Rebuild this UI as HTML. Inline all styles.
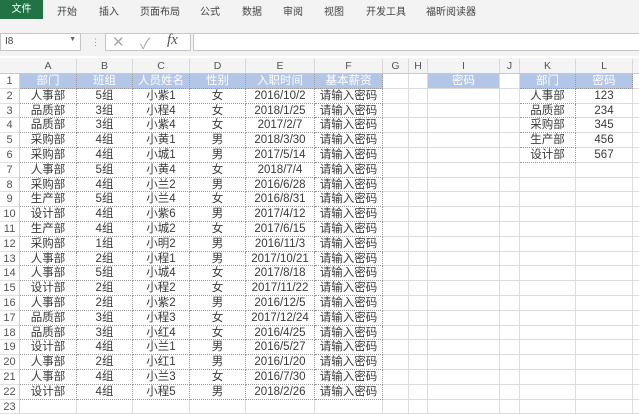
<!DOCTYPE html><html><head><meta charset="utf-8"><style>
body{margin:0;width:639px;height:407px;overflow:hidden;background:#fff;font-family:"Liberation Sans","Noto Sans CJK SC",sans-serif;position:relative}
.a{position:absolute;box-sizing:border-box}
.tab{position:absolute;top:3px;font-size:10px;color:#444}
.c{position:absolute;box-sizing:border-box;text-align:center;font-size:11.5px;color:#3a3a3a;white-space:nowrap;overflow:hidden;line-height:14.8px}
.g{border-right:1px solid #dcdcdc;border-bottom:1px solid #dcdcdc}
.d{border-right:1px dotted #999;border-bottom:1px dotted #999}
.h{background:#b4c6e7;color:#fff}
.ch{position:absolute;top:59px;height:14px;font-size:10.5px;color:#555;text-align:center;border-right:1px solid #d8d8d8;box-sizing:border-box;line-height:14px}
.rh{position:absolute;left:0;width:20px;font-size:11px;color:#555;text-align:center;border-bottom:1px solid #e0e0e0;border-right:1px solid #d0d0d0;box-sizing:border-box;background:#fff;line-height:14.8px}
</style></head><body>
<div class="a" style="left:0;top:0;width:639px;height:56px;background:#f3f3f3"></div>
<div class="a" style="left:0;top:0;width:43px;height:19px;background:#217346;color:#fff;font-size:10px;text-align:center;line-height:19px">文件</div>
<span class="tab" style="left:57px">开始</span><span class="tab" style="left:99px">插入</span><span class="tab" style="left:140px">页面布局</span><span class="tab" style="left:200px">公式</span><span class="tab" style="left:242px">数据</span><span class="tab" style="left:283px">审阅</span><span class="tab" style="left:324px">视图</span><span class="tab" style="left:366px">开发工具</span><span class="tab" style="left:426px">福昕阅读器</span>
<div class="a" style="left:0;top:33px;width:639px;height:1px;background:#d6d6d6"></div>
<div class="a" style="left:0;top:33px;width:81px;height:18px;background:#fff;border:1px solid #c6c6c6;font-size:10px;color:#444;padding:2px 4px">I8<span style="position:absolute;right:4px;top:2px;font-size:7px;color:#666">▼</span></div>
<div class="a" style="left:91px;top:37px;font-size:9px;color:#999">⋮</div>
<div class="a" style="left:105px;top:33px;width:86px;height:18px;background:#fff;border:1px solid #c6c6c6"></div>
<div class="a" style="left:112px;top:33px;font-size:15px;color:#aaa">✕</div>
<div class="a" style="left:140px;top:33px;font-size:15px;color:#aaa">✓</div>
<div class="a" style="left:167px;top:32px;font-size:15px;color:#555;font-style:italic;font-family:'Liberation Serif',serif">fx</div>
<div class="a" style="left:193px;top:33px;width:446px;height:18px;background:#fff;border:1px solid #c6c6c6;border-right:none"></div>
<div class="a" style="left:0;top:58px;width:639px;height:16px;background:#f4f4f4;border-bottom:1px solid #c8c8c8"></div>
<div id="g"></div>
<script>
var xs=[20,77,133,190,246,315,383,409,428,500,520,576,633,660],L="ABCDEFGHIJKLM",o="";
for(var i=0;i<13;i++)o+='<div class="ch" style="left:'+xs[i]+'px;width:'+(xs[i+1]-xs[i])+'px">'+L[i]+'</div>';
var R=[["部门","班组","人员姓名","性别","入职时间","基本薪资"],
["人事部","5组","小紫1","女","2016/10/2"],["品质部","3组","小程4","女","2018/1/25"],["品质部","3组","小紫4","女","2017/2/7"],["采购部","4组","小黄1","男","2018/3/30"],["采购部","4组","小城1","男","2017/5/14"],["人事部","5组","小黄4","女","2018/7/4"],["采购部","4组","小兰2","男","2016/6/28"],["生产部","5组","小兰4","女","2016/8/31"],["设计部","4组","小紫6","男","2017/4/12"],["生产部","4组","小城2","女","2017/6/15"],["采购部","1组","小明2","男","2016/11/3"],["人事部","2组","小程1","男","2017/10/21"],["人事部","5组","小城4","女","2017/8/18"],["设计部","2组","小程2","女","2017/11/22"],["人事部","2组","小紫2","男","2016/12/5"],["品质部","3组","小程3","女","2017/12/24"],["品质部","3组","小红4","女","2016/4/25"],["设计部","4组","小兰1","男","2016/5/27"],["人事部","2组","小红1","男","2016/1/20"],["人事部","4组","小兰3","女","2016/7/30"],["设计部","4组","小程5","男","2018/2/26"]];
var K=[["部门","密码"],["人事部","123"],["品质部","234"],["采购部","345"],["生产部","456"],["设计部","567"]];
var h=14.8,t0=74;
for(var r=0;r<23;r++){var y=t0+r*h;
o+='<div class="rh" style="top:'+y+'px;height:'+h+'px">'+(r+1)+'</div>';
for(var c=0;c<13;c++){var cls="c g",txt="";
if(r<22&&c<6){cls="c d";txt=c==5?(r?"请输入密码":R[0][5]):R[r][c];if(r==0)cls+=" h"}
if(r==0&&c==8){cls="c g h";txt="密码"}
if(r<6&&(c==10||c==11)){txt=K[r][c-10];cls=(c==10||r==0)?"c d":"c g";if(r==0)cls+=" h"}
o+='<div class="'+cls+'" style="left:'+xs[c]+'px;top:'+y+'px;width:'+(xs[c+1]-xs[c])+'px;height:'+h+'px">'+txt+'</div>';}}
document.getElementById("g").innerHTML=o;
</script>
</body></html>
